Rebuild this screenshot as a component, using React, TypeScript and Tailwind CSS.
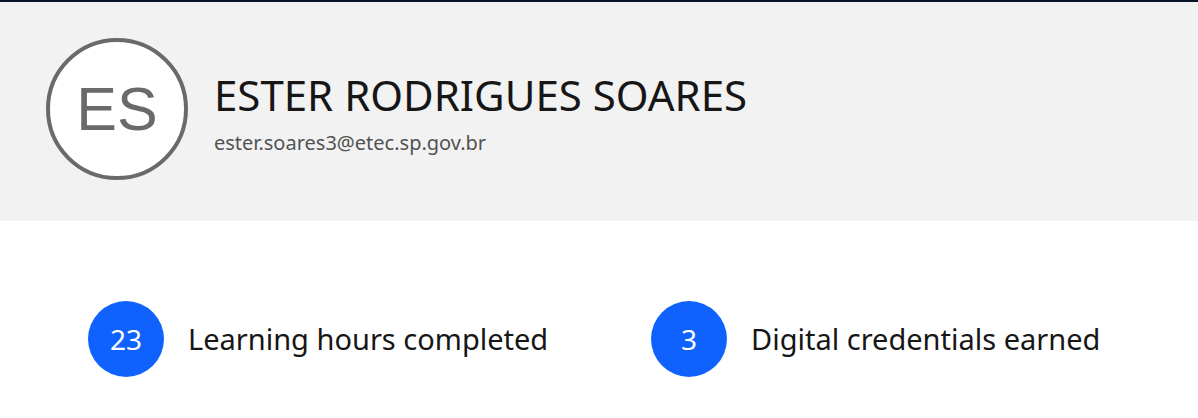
import React from 'react';

const STATS = [
  { value: '23', label: 'Learning hours completed' },
  { value: '3', label: 'Digital credentials earned' },
];

export default function App() {
  return (
    <div className="w-[1198px] h-[418px] bg-white font-['Noto_Sans',sans-serif]">
      <div className="h-[2px] bg-[#061427]" />

      {/* Profile header */}
      <div className="h-[219px] bg-[#f2f2f2] flex items-start pt-[36px] pl-[46px]">
        <div className="w-[142px] h-[142px] rounded-full border-4 border-[#6a6a6a] bg-white flex items-center justify-center shrink-0">
          <span className="text-[61px] leading-none text-[#6a6a6a] font-['Liberation_Sans',sans-serif]">ES</span>
        </div>
        <div className="ml-[26px] mt-[32px] flex flex-col">
          <h1 className="text-[42px] leading-[50px] font-normal text-[#161616]">ESTER RODRIGUES SOARES</h1>
          <p className="mt-[10px] text-[20px] leading-[26px] text-[#525252]">ester.soares3@etec.sp.gov.br</p>
        </div>
      </div>

      {/* Stats */}
      <div className="flex pl-[88px] pt-[80px]">
        {STATS.map((s) => (
          <div key={s.label} className="flex items-center w-[563px] shrink-0">
            <div className="w-[76px] h-[76px] rounded-full bg-[#0f62fe] flex items-center justify-center shrink-0">
              <span className="text-[28px] text-white">{s.value}</span>
            </div>
            <span className="ml-[24px] text-[29px] text-[#161616]">{s.label}</span>
          </div>
        ))}
      </div>
    </div>
  );
}
